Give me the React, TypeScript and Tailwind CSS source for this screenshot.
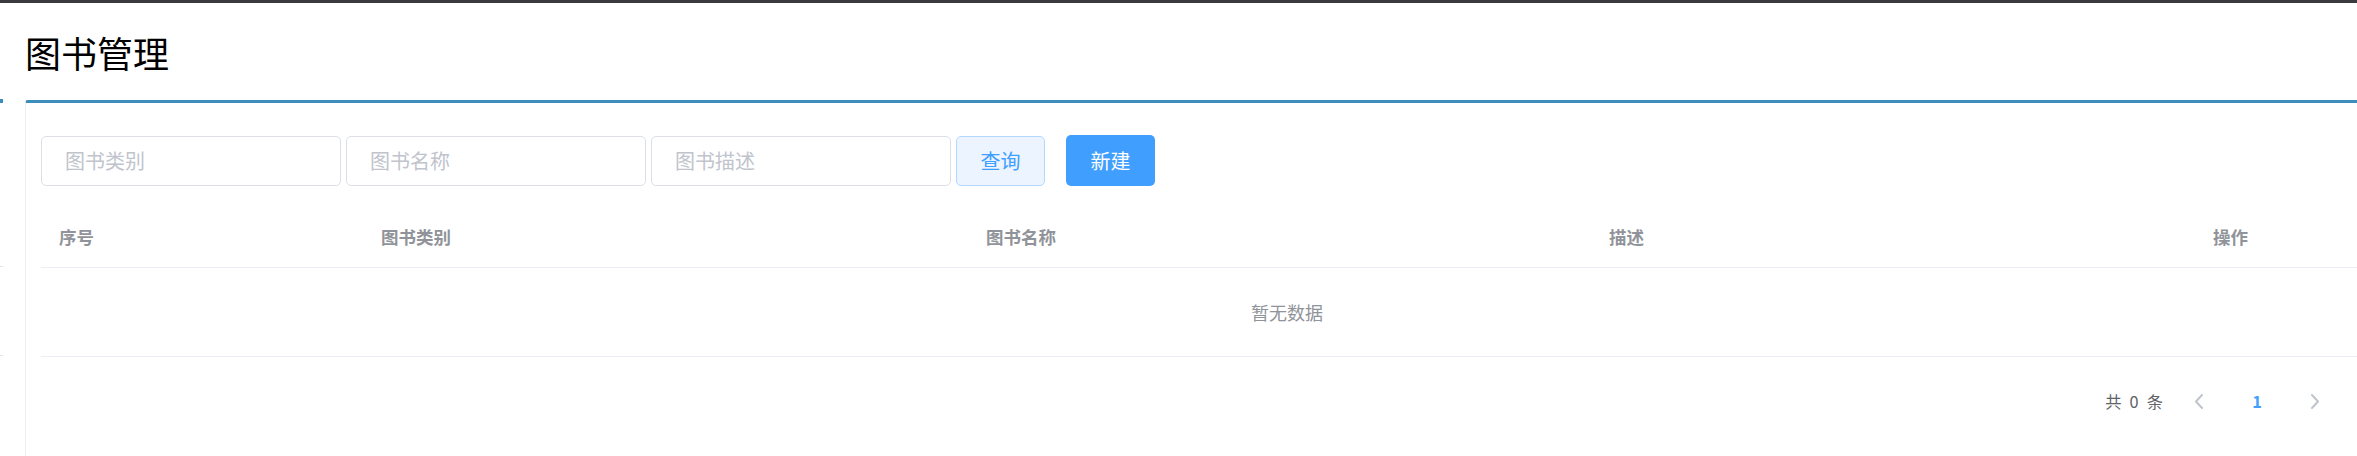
import React from 'react';

const columns = [
  { label: '序号', width: 'w-[322px]' },
  { label: '图书类别', width: 'w-[605px]' },
  { label: '图书名称', width: 'w-[623px]' },
  { label: '描述', width: 'w-[604px]' },
  { label: '操作', width: 'flex-1' },
];

function Arrow({ dir }: { dir: 'left' | 'right' }) {
  return (
    <svg width="10" height="15" viewBox="0 0 10 15" fill="none">
      <polyline
        points={dir === 'left' ? '8,1 2,7.5 8,14' : '2,1 8,7.5 2,14'}
        stroke="#c0c4cc"
        strokeWidth="2"
        strokeLinecap="round"
        strokeLinejoin="round"
      />
    </svg>
  );
}

export default function App() {
  return (
    <div className="w-[2357px] h-[456px] overflow-hidden bg-white flex flex-col font-['Noto_Sans_CJK_SC','Noto_Sans',sans-serif]">
      <div className="h-[3px] bg-[#3a3a3d] shrink-0" />

      <div className="flex flex-1 min-h-0">
        {/* left edge remnants */}
        <div className="w-[3px] flex flex-col shrink-0">
          <div className="mt-[96px] h-[4px] bg-[#3c8dbc]" />
          <div className="mt-[163px] h-[1px] bg-[#e4e4e4]" />
          <div className="mt-[88px] h-[1px] bg-[#e4e4e4]" />
        </div>

        <div className="flex-1 flex flex-col pl-[22px] min-w-0">
          <h1 className="mt-[32px] mb-[30px] h-[35px] text-[36px] leading-[35px] text-black font-normal whitespace-nowrap">图书管理</h1>

          <div className="flex-1 min-w-0 border-t-[3px] border-t-[#3c8dbc] border-l border-l-[#eeeeee] rounded-tl-[3px] pl-[15px] pt-[32px]">
            {/* search bar */}
            <div className="flex items-center">
              {['图书类别', '图书名称', '图书描述'].map((p, i) => (
                <input
                  key={p}
                  placeholder={p}
                  className={`w-[300px] h-[50px] border border-[#dcdfe6] rounded-[5px] pl-[23px] text-[20px] text-[#606266] placeholder:text-[#c0c4cc] outline-none ${i > 0 ? 'ml-[5px]' : ''}`}
                />
              ))}
              <button className="ml-[5px] w-[89px] h-[50px] border border-[#b3d8ff] bg-[#ecf5ff] text-[#409eff] rounded-[5px] text-[20px]">
                查询
              </button>
              <button className="ml-[21px] w-[89px] h-[51px] bg-[#409eff] text-white rounded-[5px] text-[20px]">
                新建
              </button>
            </div>

            <div className="mt-[21px] w-[2492px]">
              <div className="flex h-[61px] items-center border-b border-[#ebeef5]">
                {columns.map((c) => (
                  <div key={c.label} className={`${c.width} pl-[18px] text-[17.5px] font-bold text-[#909399]`}>
                    {c.label}
                  </div>
                ))}
              </div>
              <div className="h-[89px] flex items-center justify-center border-b border-[#ebeef5] pt-[1px]">
                <span className="text-[18px] text-[#909399]">暂无数据</span>
              </div>
            </div>

            {/* pagination */}
            <div className="mt-[27px] h-[35px] flex items-center justify-end pr-[13px]">
              <span className="mr-[7px] text-[16.25px] text-[#606266] [word-spacing:4.5px]">共 0 条</span>
              <div className="w-[58px] h-[35px] flex items-center justify-center">
                <Arrow dir="left" />
              </div>
              <div className="w-[58px] h-[35px] flex items-center justify-center text-[16.25px] font-bold text-[#409eff]">
                1
              </div>
              <div className="w-[58px] h-[35px] flex items-center justify-center">
                <Arrow dir="right" />
              </div>
            </div>
          </div>
        </div>
      </div>
    </div>
  );
}
